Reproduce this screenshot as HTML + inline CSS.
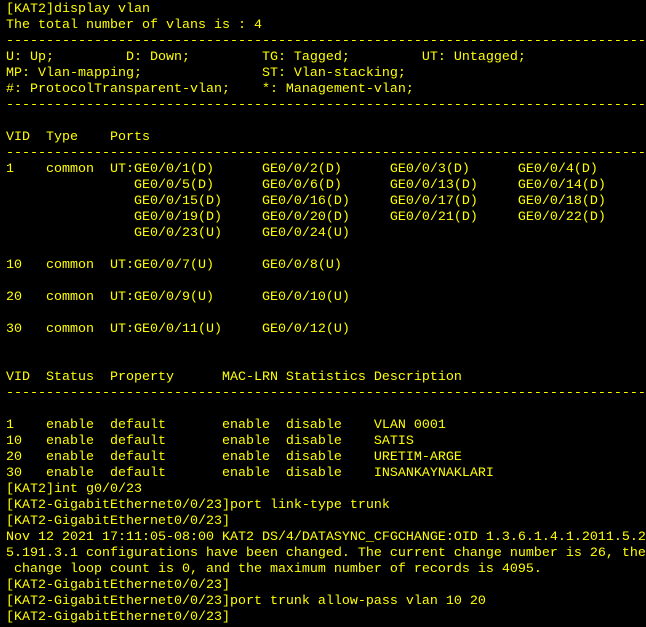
<!DOCTYPE html>
<html><head><meta charset="utf-8"><style>
html,body{margin:0;padding:0;background:#000;width:646px;height:627px;overflow:hidden}
pre{margin:0;padding:2px 0 0 6px;font-family:"Liberation Mono",monospace;font-size:13.33px;line-height:16px;color:#ffff00;white-space:pre}
</style></head><body><pre>[KAT2]display vlan
The total number of vlans is : 4
--------------------------------------------------------------------------------
U: Up;         D: Down;         TG: Tagged;         UT: Untagged;
MP: Vlan-mapping;               ST: Vlan-stacking;
#: ProtocolTransparent-vlan;    *: Management-vlan;
--------------------------------------------------------------------------------

VID  Type    Ports
--------------------------------------------------------------------------------
1    common  UT:GE0/0/1(D)      GE0/0/2(D)      GE0/0/3(D)      GE0/0/4(D)
                GE0/0/5(D)      GE0/0/6(D)      GE0/0/13(D)     GE0/0/14(D)
                GE0/0/15(D)     GE0/0/16(D)     GE0/0/17(D)     GE0/0/18(D)
                GE0/0/19(D)     GE0/0/20(D)     GE0/0/21(D)     GE0/0/22(D)
                GE0/0/23(U)     GE0/0/24(U)

10   common  UT:GE0/0/7(U)      GE0/0/8(U)

20   common  UT:GE0/0/9(U)      GE0/0/10(U)

30   common  UT:GE0/0/11(U)     GE0/0/12(U)


VID  Status  Property      MAC-LRN Statistics Description
--------------------------------------------------------------------------------

1    enable  default       enable  disable    VLAN 0001
10   enable  default       enable  disable    SATIS
20   enable  default       enable  disable    URETIM-ARGE
30   enable  default       enable  disable    INSANKAYNAKLARI
[KAT2]int g0/0/23
[KAT2-GigabitEthernet0/0/23]port link-type trunk
[KAT2-GigabitEthernet0/0/23]
Nov 12 2021 17:11:05-08:00 KAT2 DS/4/DATASYNC_CFGCHANGE:OID 1.3.6.1.4.1.2011.5.2
5.191.3.1 configurations have been changed. The current change number is 26, the
 change loop count is 0, and the maximum number of records is 4095.
[KAT2-GigabitEthernet0/0/23]
[KAT2-GigabitEthernet0/0/23]port trunk allow-pass vlan 10 20
[KAT2-GigabitEthernet0/0/23]</pre></body></html>
